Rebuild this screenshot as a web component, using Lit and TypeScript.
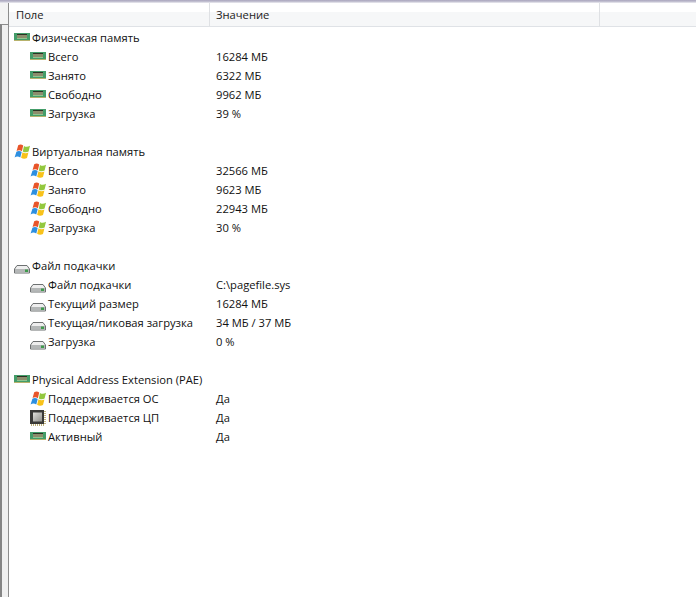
import { LitElement, html, css, svg } from "lit";
import { customElement } from "lit/decorators.js";

type Icon = "ram" | "win" | "disk" | "cpu";
type Row = { icon: Icon; label: string; value?: string; child?: boolean };

const ramIcon = svg`<svg class="ic" viewBox="0 0 16 16" width="16" height="16">
  <rect x="0" y="3" width="16" height="8" fill="#449d69"/>
  <rect x="3" y="4" width="10" height="4" fill="#2b3324"/>
  <path d="M4 5v3M6 5v3M8 5v3M10 5v3M12 5v3" stroke="#efe9b4" stroke-width="1"/>
  <rect x="3" y="8" width="10" height="1" fill="#8fc58f"/>
  <rect x="0" y="10" width="16" height="1" fill="#b7b26c"/>
</svg>`;

const winIcon = svg`<svg class="ic" viewBox="0 0 16 16" width="16" height="16">
  <path d="M4.2 1.2C6.2 .2 7.8 .5 9.2 1.5L7.9 7.2C6.4 6.1 4.4 5.9 2.6 7Z" fill="#e8552a"/>
  <path d="M10 1.9C11.6 3 13.6 3.1 16 1.8L14.6 7.6C12.6 8.7 10.4 8.5 8.8 7.4Z" fill="#93c83e"/>
  <path d="M2.4 7.7C4.2 6.7 6.2 6.8 7.7 8L6.3 13.5C4.6 12.4 2.4 12.3 .6 13.4Z" fill="#2d8fe0"/>
  <path d="M8.5 8.2C10.2 9.3 12.4 9.5 14.4 8.4L13 14C11 15.1 8.8 14.9 7.1 13.8Z" fill="#f8c21a"/>
</svg>`;

const diskIcon = svg`<svg class="ic" viewBox="0 0 16 16" width="16" height="16">
  <path d="M3 7.5h10l2.5 3.5v4H.5v-4Z" fill="#eeeeee" stroke="#6d7071" stroke-width="1"/>
  <rect x="1" y="11" width="14" height="3.5" fill="#b4b7b7"/>
  <rect x="11" y="11.5" width="3" height="2.5" fill="#3f9a4c"/>
</svg>`;

const cpuIcon = svg`<svg class="ic" viewBox="0 0 16 16" width="16" height="16">
  <defs>
    <linearGradient id="cpuFace" x1="0" y1="0" x2="1" y2="1">
      <stop offset="0" stop-color="#e2e2de"/>
      <stop offset="1" stop-color="#8f8f8a"/>
    </linearGradient>
  </defs>
  <rect x="0" y="0" width="14" height="14" fill="#3a3a38"/>
  <rect x="3" y="2.5" width="9" height="9" fill="url(#cpuFace)"/>
  <path d="M1 15h14" stroke="#a8954e" stroke-width="1.4" stroke-dasharray="1 1"/>
  <path d="M15 1v14" stroke="#a8954e" stroke-width="1.4" stroke-dasharray="1 1"/>
</svg>`;

const icons: Record<Icon, unknown> = { ram: ramIcon, win: winIcon, disk: diskIcon, cpu: cpuIcon };

const groups: Row[][] = [
  [
    { icon: "ram", label: "Физическая память" },
    { icon: "ram", label: "Всего", value: "16284 МБ", child: true },
    { icon: "ram", label: "Занято", value: "6322 МБ", child: true },
    { icon: "ram", label: "Свободно", value: "9962 МБ", child: true },
    { icon: "ram", label: "Загрузка", value: "39 %", child: true },
  ],
  [
    { icon: "win", label: "Виртуальная память" },
    { icon: "win", label: "Всего", value: "32566 МБ", child: true },
    { icon: "win", label: "Занято", value: "9623 МБ", child: true },
    { icon: "win", label: "Свободно", value: "22943 МБ", child: true },
    { icon: "win", label: "Загрузка", value: "30 %", child: true },
  ],
  [
    { icon: "disk", label: "Файл подкачки" },
    { icon: "disk", label: "Файл подкачки", value: "C:\\pagefile.sys", child: true },
    { icon: "disk", label: "Текущий размер", value: "16284 МБ", child: true },
    { icon: "disk", label: "Текущая/пиковая загрузка", value: "34 МБ / 37 МБ", child: true },
    { icon: "disk", label: "Загрузка", value: "0 %", child: true },
  ],
  [
    { icon: "ram", label: "Physical Address Extension (PAE)" },
    { icon: "win", label: "Поддерживается ОС", value: "Да", child: true },
    { icon: "cpu", label: "Поддерживается ЦП", value: "Да", child: true },
    { icon: "ram", label: "Активный", value: "Да", child: true },
  ],
];

@customElement("app-root")
export class AppRoot extends LitElement {
  static styles = css`
    :host {
      display: flex;
      flex-direction: column;
      width: 696px;
      height: 597px;
      overflow: hidden;
      background: #fff;
      font-family: "Open Sans", "Noto Sans", sans-serif;
      font-size: 11.2px;
      color: #111;
    }
    .topline {
      height: 3px;
      flex: none;
      background: linear-gradient(#a9a5bd, #c9c7d6 66%, #f4f4f6);
    }
    .body {
      flex: 1;
      display: flex;
      min-height: 0;
    }
    .strip {
      flex: none;
      width: 9px;
      box-sizing: border-box;
      display: flex;
      flex-direction: column;
      border-right: 1px solid #8d8d8d;
      background: #f4f4f4;
    }
    .strip-top {
      flex: none;
      height: 21px;
    }
    .strip-rest {
      flex: 1;
      border-top: 1px solid #8c8c8c;
      border-left: 2px solid #858585;
      background: #f0f0f0;
    }
    .main {
      flex: 1;
      min-width: 0;
      display: flex;
      flex-direction: column;
    }
    .head {
      flex: none;
      height: 24px;
      box-sizing: border-box;
      display: grid;
      grid-template-columns: 201px 390px 96px;
      background: linear-gradient(#ffffff 0 40%, #f6f7f8 40% 100%);
      border-bottom: 1px solid #dfe2e6;
    }
    .hcell {
      display: flex;
      align-items: center;
      padding-left: 6px;
      box-sizing: border-box;
      border-right: 1px solid #dfe1e4;
      color: #222;
    }
    .hcell:first-child {
      padding-left: 7px;
    }
    .hcell:last-child {
      border-right: none;
    }
    .rows {
      padding-top: 1px;
    }
    .row {
      height: 19px;
      display: grid;
      grid-template-columns: 207px 1fr;
      align-items: center;
      white-space: nowrap;
    }
    .name {
      display: flex;
      align-items: center;
      gap: 2px;
      padding-left: 5px;
    }
    .row.child .name {
      padding-left: 21px;
    }
    .ic {
      flex: none;
      display: block;
    }
    .spacer {
      height: 19px;
    }
  `;

  render() {
    return html`
      <div class="topline"></div>
      <div class="body">
        <div class="strip">
          <div class="strip-top"></div>
          <div class="strip-rest"></div>
        </div>
        <div class="main">
          <div class="head">
            <div class="hcell">Поле</div>
            <div class="hcell">Значение</div>
            <div class="hcell"></div>
          </div>
          <div class="rows">
            ${groups.map(
              (g) => html`
                ${g.map(
                  (r) => html`<div class="row ${r.child ? "child" : ""}">
                    <div class="name">${icons[r.icon]}<span>${r.label}</span></div>
                    <div>${r.value ?? ""}</div>
                  </div>`
                )}
                <div class="spacer"></div>
              `
            )}
          </div>
        </div>
      </div>
    `;
  }
}
